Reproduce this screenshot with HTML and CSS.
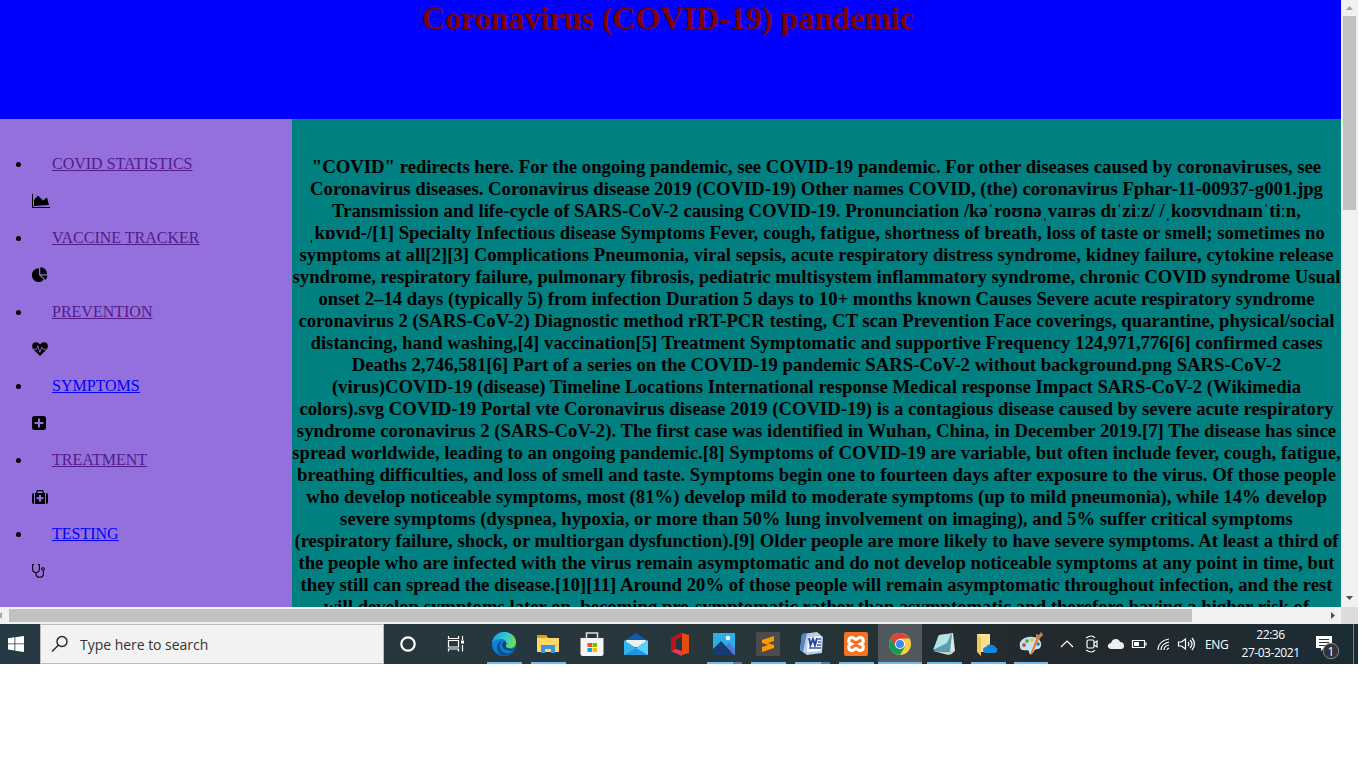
FILE: index.html
```html
<!DOCTYPE html>
<html lang="en">
<head>
<meta charset="utf-8">
<title>Coronavirus (COVID-19) pandemic</title>
<link rel="stylesheet" href="styles.css">
</head>
<body>
<div class="screen">
  <div class="browser">
    <div class="page">
      <header class="banner"><h1 class="title">Coronavirus (COVID-19) pandemic</h1></header>
      <div class="columns">
        <nav class="sidebar">
          <ul class="menu">
            <li class="item"><a class="link visited" href="#">COVID STATISTICS</a><svg class="icon" viewBox="0 0 18 16"><path d="M0 1h1v13h17v1H0z"/><path d="M2 13V7l4-4.500 5 5 4-3 2 7.500z"/></svg></li>
            <li class="item"><a class="link visited" href="#">VACCINE TRACKER</a><svg class="icon" viewBox="0 0 18 16"><path d="M7 1.500V8l4.800 4.800A6.900 6.900 0 1 1 7 1.200z"/><path d="M8.300.3a6.900 6.900 0 0 1 6.800 6.900H8.300zM9.200 8.600h6.200a6.700 6.700 0 0 1-1.900 4.400z"/></svg></li>
            <li class="item"><a class="link visited" href="#">PREVENTION</a><svg class="icon" viewBox="0 0 18 16"><path d="M8 15 1.500 8.500C-1.200 5 .4 1.200 4 1.200c2 0 3 1 4 2.200 1-1.200 2-2.200 4-2.200 3.600 0 5.200 3.800 2.500 7.300z"/><path d="M1.500 8.200h3l1.300-3.400 2.100 6.400 1.900-5 1.200 2h3.500" fill="none" stroke="#9370db" stroke-width=".9"/></svg></li>
            <li class="item"><a class="link" href="#">SYMPTOMS</a><svg class="icon" viewBox="0 0 18 16"><path fill-rule="evenodd" d="M2.500 1h9A2.500 2.500 0 0 1 14 3.500v9a2.500 2.500 0 0 1-2.500 2.500h-9A2.500 2.500 0 0 1 0 12.500v-9A2.500 2.500 0 0 1 2.500 1zM6 3.500V7H2.500v2H6v3.500h2V9h3.500V7H8V3.500z"/></svg></li>
            <li class="item"><a class="link visited" href="#">TREATMENT</a><svg class="icon" viewBox="0 0 18 16"><path d="M2 4v11A2 2 0 0 1 0 13V6a2 2 0 0 1 2-2zM14 4v11a2 2 0 0 0 2-2V6a2 2 0 0 0-2-2z"/><path fill-rule="evenodd" d="M3 4h1.300V2.500Q4.300 1 5.500 1h5q1.200 0 1.200 1.500V4H13v11H3zM5.500 2.200V4h5V2.200zM7 6v2.300H4.500v2H7v2.500h2v-2.500h2.500v-2H9V6z"/></svg></li>
            <li class="item"><a class="link" href="#">TESTING</a><svg class="icon" viewBox="0 0 18 16"><path d="M2 1.500H.6V6q0 3.500 3.400 3.500T7.400 6V1.500H6M4 9.500v1.200q0 3.600 3.700 3.600t3.700-3.600V7.500" fill="none" stroke="#000" stroke-width="1.100"/><circle cx="11" cy="6" r="1.400" fill="none" stroke="#000"/></svg></li>
          </ul>
        </nav>
        <main class="content">
          <h3 class="article">
            <span class="line">"COVID" redirects here. For the ongoing pandemic, see COVID-19 pandemic. For other diseases caused by coronaviruses, see</span>
            <span class="line">Coronavirus diseases. Coronavirus disease 2019 (COVID-19) Other names COVID, (the) coronavirus Fphar-11-00937-g001.jpg</span>
            <span class="line">Transmission and life-cycle of SARS-CoV-2 causing COVID-19. Pronunciation /kəˈroʊnəˌvaɪrəs dɪˈziːz/ /ˌkoʊvɪdnaɪnˈtiːn,</span>
            <span class="line">ˌkɒvɪd-/[1] Specialty Infectious disease Symptoms Fever, cough, fatigue, shortness of breath, loss of taste or smell; sometimes no</span>
            <span class="line">symptoms at all[2][3] Complications Pneumonia, viral sepsis, acute respiratory distress syndrome, kidney failure, cytokine release</span>
            <span class="line">syndrome, respiratory failure, pulmonary fibrosis, pediatric multisystem inflammatory syndrome, chronic COVID syndrome Usual</span>
            <span class="line">onset 2–14 days (typically 5) from infection Duration 5 days to 10+ months known Causes Severe acute respiratory syndrome</span>
            <span class="line">coronavirus 2 (SARS-CoV-2) Diagnostic method rRT-PCR testing, CT scan Prevention Face coverings, quarantine, physical/social</span>
            <span class="line">distancing, hand washing,[4] vaccination[5] Treatment Symptomatic and supportive Frequency 124,971,776[6] confirmed cases</span>
            <span class="line">Deaths 2,746,581[6] Part of a series on the COVID-19 pandemic SARS-CoV-2 without background.png SARS-CoV-2</span>
            <span class="line">(virus)COVID-19 (disease) Timeline Locations International response Medical response Impact SARS-CoV-2 (Wikimedia</span>
            <span class="line">colors).svg COVID-19 Portal vte Coronavirus disease 2019 (COVID-19) is a contagious disease caused by severe acute respiratory</span>
            <span class="line">syndrome coronavirus 2 (SARS-CoV-2). The first case was identified in Wuhan, China, in December 2019.[7] The disease has since</span>
            <span class="line">spread worldwide, leading to an ongoing pandemic.[8] Symptoms of COVID-19 are variable, but often include fever, cough, fatigue,</span>
            <span class="line">breathing difficulties, and loss of smell and taste. Symptoms begin one to fourteen days after exposure to the virus. Of those people</span>
            <span class="line">who develop noticeable symptoms, most (81%) develop mild to moderate symptoms (up to mild pneumonia), while 14% develop</span>
            <span class="line">severe symptoms (dyspnea, hypoxia, or more than 50% lung involvement on imaging), and 5% suffer critical symptoms</span>
            <span class="line">(respiratory failure, shock, or multiorgan dysfunction).[9] Older people are more likely to have severe symptoms. At least a third of</span>
            <span class="line">the people who are infected with the virus remain asymptomatic and do not develop noticeable symptoms at any point in time, but</span>
            <span class="line">they still can spread the disease.[10][11] Around 20% of those people will remain asymptomatic throughout infection, and the rest</span>
            <span class="line">will develop symptoms later on, becoming pre-symptomatic rather than asymptomatic and therefore having a higher risk of</span>
          </h3>
        </main>
      </div>
    </div>
    <div class="vbar"><svg class="arrow" viewBox="0 0 17 16"><path d="M5 10h7L8.500 6z" fill="#a3a3a3"/></svg><div class="vthumb"></div><svg class="arrow" viewBox="0 0 17 16"><path d="M5 5h7L8.500 9z" fill="#505050"/></svg></div>
    <div class="hbar"><svg class="harrow" viewBox="0 0 9 17"><path d="M2 5v7L-2 8.500z" fill="#a3a3a3"/></svg><div class="hthumb"></div><svg class="harrow hright" viewBox="0 0 17 17"><path d="M7 5v7l4-3.500z" fill="#505050"/></svg></div>
    <div class="corner"></div>
  </div>
  <footer class="taskbar">
    <div class="start"><svg width="16" height="16" viewBox="0 0 16 16"><path fill="#fff" d="M0 2.300 6.500 1.300V7.500H0zM7.300 1.200 16 0v7.500H7.300zM0 8.300h6.500v6.200L0 13.600zM7.300 8.300H16V16l-8.700-1.200z"/></svg></div>
    <div class="search"><svg width="18" height="18" viewBox="0 0 18 18" fill="none" stroke="#222" stroke-width="1.400"><circle cx="11" cy="6.500" r="5"/><path d="M7.300 10.200 1 16.500"/></svg><span class="hint">Type here to search</span></div>
    <div class="apps">
      <div class="app"><svg viewBox="0 0 24 24"><circle cx="12" cy="12" r="6.700" fill="none" stroke="#fff" stroke-width="2.200"/></svg></div>
      <div class="app"><svg viewBox="0 0 24 24" fill="none" stroke="#fff" stroke-width="1.200"><path d="M4.500 4v2.500h10V4M4.500 19.500V17h10v2.500M4.500 8.500h10V15h-10zM18.500 4v4M18.500 13v6.500"/><path d="M17 8.500h3v3h-3z" fill="#fff" stroke="none"/></svg></div>
      <div class="app open"><svg viewBox="0 0 24 24"><defs><linearGradient id="eg" x1="0" y1=".2" x2="1" y2=".5"><stop stop-color="#179de1"/><stop offset=".55" stop-color="#36c5d0"/><stop offset="1" stop-color="#6de04b"/></linearGradient></defs><circle cx="12" cy="12" r="12" fill="#0d7fd6"/><path d="M0 11C1 4 6 0 12 0c7 0 12 5 12 10 0 4-3 6-6 6-3 0-5-1-4-3 1-2 0-6-5-6-4 0-7 1-9 4z" fill="url(#eg)"/><path d="M10 9c-4 3-2 11 4 12 3 1 6-1 8-3-3 5-9 7-13 5-6-3-5-13 1-14z" fill="#0b4d97"/><path d="M12 9c3 1 3 3 2 4-1 2 1 4 5 4 2 0 4-1 4.700-3l-1.400 4C17 20 10 18 10 12z" fill="#1a4268"/></svg></div>
      <div class="app open"><svg viewBox="0 0 24 24"><path d="M1 3h9l2 3h11v14H1z" fill="#ffd768"/><path d="M1 3h9l1 2-1 1H1z" fill="#e09d0a"/><path d="M5 13h14v8h-4v-4H9v4H5z" fill="#3c96dd"/></svg></div>
      <div class="app"><svg viewBox="0 0 24 24"><path d="M6.500 7V1h11v6" fill="none" stroke="#ddd" stroke-width="1.500"/><path d="M.5 6h23v16q0 2-2 2h-19q-2 0-2-2z" fill="#f5f5f5"/><path d="M7.500 11H12v4H7.500z" fill="#f25022"/><path d="M12.500 11H17v4h-4.500z" fill="#7fba00"/><path d="M7.500 16H12v4H7.500z" fill="#00a4ef"/><path d="M12.500 16H17v4h-4.500z" fill="#ffb900"/></svg></div>
      <div class="app"><svg viewBox="0 0 24 24"><path d="M0 9 12 1l12 8v6H0z" fill="#0a5dac"/><path d="M2 8h20v7H2z" fill="#eee"/><path d="M0 8l12 8 12-8v15H0z" fill="#31b7ee"/><path d="m12 16 12 7V8z" fill="#58d2fa"/><path d="m0 23 12-7 12 7z" fill="#2196dc"/></svg></div>
      <div class="app"><svg viewBox="0 0 24 24"><path d="M3 6 14 0v5L8 8v9l-5 2z" fill="#b9141b"/><path d="m14 1 7 2v18l-7 2z" fill="#e64a12"/><path d="m3 19 5-2 6 2v5z" fill="#ee3654"/></svg></div>
      <div class="app open multi"><svg viewBox="0 0 24 24"><path d="M1 1h22v22H1z" fill="#2caee9"/><circle cx="16" cy="6" r="2.200" fill="#fff"/><path d="m12 16 5-5 6 6v6H12z" fill="#5778cf"/><path d="m1 17 8-8 13 14H1z" fill="#173d70"/></svg></div>
      <div class="app open"><svg viewBox="0 0 24 24"><rect width="24" height="24" rx="2" fill="#4b4b4b"/><path d="m6 8 12-4v5l-6 2 6 2v3L6 20v-5l6-2-6-2z" fill="#ff9800"/></svg></div>
      <div class="app open multi"><svg viewBox="0 0 24 24"><path d="M2 2 17 0l6 5-1 16-15 2-7-5z" fill="#b8cdea"/><path d="M2 2 7 1 3 20l-3-2z" fill="#5683c2"/><path d="m8 5 13-1v15L7 20z" fill="#f8fbff"/><path d="m9 6 1.500 7L13 7l2 6 2-7" fill="none" stroke="#23479a" stroke-width="2"/><path d="M18 7h3M18 10h3M17 13h4M9 16h12" stroke="#315bab" stroke-width="1.500"/></svg></div>
      <div class="app open"><svg viewBox="0 0 24 24"><rect width="24" height="24" rx="2" fill="#f07422"/><path d="M8 5.500c-4 0-4.500 5-1 6.500-3.500 1.500-3 6.500 1 6.500 2.500 0 2-2 4-2s1.500 2 4 2c4 0 4.500-5 1-6.500 3.500-1.500 3-6.500-1-6.500-2.500 0-2 2-4 2s-1.500-2-4-2z" fill="none" stroke="#fff" stroke-width="3"/></svg></div>
      <div class="app open active"><svg viewBox="0 0 24 24"><circle cx="12" cy="12" r="11" fill="#ffcd42"/><path d="M2.500 6.500A11 11 0 0 1 21.500 6.500H12L7 15z" fill="#db4437"/><path d="M2.500 6.500A11 11 0 0 0 12 23l5-8.500H7.500z" fill="#109d58"/><circle cx="12" cy="12" r="5" fill="#fff"/><circle cx="12" cy="12" r="4" fill="#4285f4"/></svg></div>
      <div class="app open"><svg viewBox="0 0 24 24"><path d="m8 3 13-2 2 18-4 3z" fill="#dfe8e8"/><path d="M6 4 20 2l-2 18-16-1z" fill="#5c9eab"/><path d="m7 3 12-1-4 9L1 18z" fill="#b4e2e8"/><path d="m1 19 16 1 5-2-2 4-4 1z" fill="#c9d0ce"/></svg></div>
      <div class="app open"><svg viewBox="0 0 24 24"><path d="M1 2h13v18H1z" fill="#ffe093"/><path d="m1 2 4 4v18l-4-4z" fill="#f2c653"/><path d="M10 21q-3 0-3-3t3-3q2-4 6-2 3 0 4 3 2 0 1 3 0 2-2 2z" fill="#1684db"/></svg></div>
      <div class="app open last"><svg viewBox="0 0 24 24"><path d="M1 15C-1 8 7 4 14 5c7 0 10 7 7 11-2 2-4 0-6 3-2 4-5 4-5 1s-4-1-6-2c-2 0-3-1-3-3z" fill="#c5e1f2"/><circle cx="5" cy="13" r="2" fill="#db4a43"/><circle cx="8" cy="9" r="1.800" fill="#46a842"/><circle cx="13" cy="8" r="1.800" fill="#f3b932"/><circle cx="19" cy="12" r="1.800" fill="#3573bf"/><path d="m11 23 6-16 2.500 1-6.500 14z" fill="#e17d22"/><path d="m17 2 3 1 2-3 2 3-3 3-1 2-3-1z" fill="#b9895c"/></svg></div>
    </div>
    <div class="tray">
      <svg width="110" height="20" viewBox="0 0 110 20" fill="none" stroke="#fff" stroke-width="1.200"><path d="m1 13 6-6 6 6"/><path d="M26 4q6-4 9 0M26 16q6 4 9 0"/><rect x="27" y="6" width="7" height="8" rx="1.500"/><path d="m34 9 3-2v6l-3-2"/><path d="M51 15q-4-1-3-4 1-2 3-2 1-4 5-4 3 0 4 3 4 0 4 4 0 3-3 3z" fill="#eee" stroke="none"/><path d="M72.500 6.500h12v7h-12zM86 8.500v3"/><path d="M74 8h5v4h-5z" fill="#fff" stroke="none"/></svg>
      <svg class="signal" width="40" height="20" viewBox="0 0 40 20" fill="none" stroke="#fff" stroke-width="1.200"><path d="M1 16Q1 7 12 5M4 16q0-6 8-8M7 16q0-4 5-5M10 16q0-1 2-2M21.500 8v4h3l4 3V5l-4 3zM31 8q2 2 0 4M33 6q4 4 0 8M35 4q5 6 0 12"/></svg>
      <span class="lang">ENG</span>
      <div class="clock"><span>22:36</span><span>27-03-2021</span></div>
      <svg class="notice" width="26" height="26" viewBox="0 0 26 26"><path d="M1 1h16v12h-8l-3 3v-3H1z" fill="#fff"/><path d="M4 4.500h10M4 7.500h10M4 10.500h7" stroke="#25343a"/><circle cx="16" cy="16" r="7.700" fill="#303438" stroke="#888"/><text class="count" x="16" y="20.500" text-anchor="middle">1</text></svg>
    </div>
  </footer>
</div>
</body>
</html>
```
FILE: styles.css
```css
body{margin:0;background:#fff;overflow:hidden;font-family:"Liberation Serif",serif}
.screen{width:1358px;height:664px;display:grid;grid-template-rows:624px 40px}
.browser{display:grid;grid-template-columns:1341px 17px;grid-template-rows:607px 17px;overflow:hidden}
.page{display:grid;grid-template-rows:119px 488px;overflow:hidden}
.banner{background:#00f}
.title{margin:0;padding-right:5px;font-size:32px;line-height:36px;text-align:center;color:#800000}
.columns{display:grid;grid-template-columns:292px 1049px;overflow:hidden}
.sidebar{background:#9370db}
.menu{margin:0;padding:36px 0 0 32px;list-style:none}
.item{height:74px;display:grid;grid-template-rows:37px 37px;position:relative}
.item::before{content:"";position:absolute;left:-16px;top:7px;width:5px;height:5px;border-radius:50%;background:#000}
.link{padding-left:20px;font-size:16px;line-height:18px;color:#00f;justify-self:start;text-decoration:underline}
.visited{color:#551a8b}
.icon{width:18px;height:16px;margin-top:1px}
.content{background:#008080;overflow:hidden}
.article{margin:0;padding-top:37px;font-size:18.73px;line-height:22px;display:flex;flex-direction:column;align-items:center}
.line{display:block;height:22px;white-space:nowrap}
.vbar{background:#f1f1f1;display:flex;flex-direction:column}
.arrow{width:17px;height:16px;flex:none}
.vthumb{width:13px;height:194px;margin:0 2px auto;background:#c1c1c1}
.hbar{background:#f1f1f1;display:flex;align-items:center}
.harrow{width:9px;height:17px;flex:none}
.hthumb{width:1183px;height:13px;background:#c1c1c1}
.hright{width:17px;margin-left:auto}
.corner{background:#dcdcdc}
.taskbar{display:flex;color:#fff;background:linear-gradient(90deg,#263a43,#26363b 55%,#23292c 78%,#1c2c34);font-family:"Open Sans","Noto Sans",sans-serif}
.start{width:40px;display:flex;align-items:center;justify-content:center;padding-right:8px;box-sizing:border-box}
.search{width:344px;box-sizing:border-box;border:1px solid #bbb;background:#f2f2f2;display:flex;align-items:center;padding-left:10px;gap:11px}
.hint{color:#333;font-size:14px;letter-spacing:-.03px}
.apps{display:flex;padding-left:2px}
.app{width:44px;height:40px;display:flex;align-items:center;justify-content:center;box-sizing:border-box;position:relative}
.app svg{width:24px;height:24px}
.app:nth-child(2){margin:0 4px}
.open::after{content:"";position:absolute;bottom:0;left:5px;width:35px;height:2px;background:#76b9ed}
.multi::after{background:linear-gradient(90deg,#76b9ed 26px,#4f83ac 26px)}
.active{background:#50575d}
.active::after{left:0;width:44px}
.last{width:42px}
.last::after{left:4px;width:34px}
.tray{flex:1;display:flex;align-items:center;border-right:1px solid #778087;margin-right:4px;padding-left:8px}
.tray svg{flex:none}
.signal{margin-left:-13px}
.lang{font-size:12px;margin-left:8px;letter-spacing:-.3px}
.clock{width:62px;margin-left:11px;display:flex;flex-direction:column;align-items:center;font-size:12px;line-height:18px;letter-spacing:-.45px;white-space:nowrap}
.notice{margin:7px 0 0 13px}
.count{fill:#fff;font-size:12px}
```
